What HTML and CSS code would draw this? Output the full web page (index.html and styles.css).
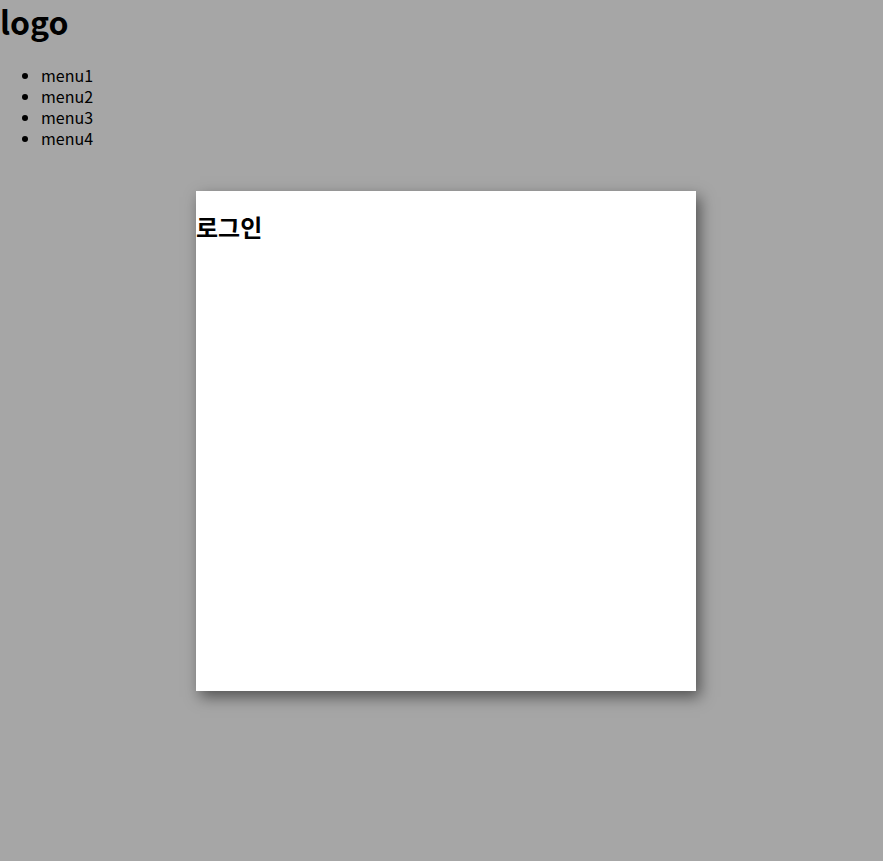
FILE: index.html
```html
<!DOCTYPE html>
<html lang="ko">
<head>
<meta charset="utf-8">
<title>login</title>
<link rel="stylesheet" href="styles.css">
</head>
<body>
<header class="header">
  <h1 class="logo">logo</h1>
  <ul class="menu">
    <li>menu1</li>
    <li>menu2</li>
    <li>menu3</li>
    <li>menu4</li>
  </ul>
</header>
<main class="stage">
  <section class="modal">
    <h2 class="modal-title">로그인</h2>
  </section>
</main>
</body>
</html>
```

FILE: styles.css
```css
html, body {
  margin: 0;
  padding: 0;
  background: #a6a6a6;
}
body {
  min-height: 100vh;
  font-family: "Noto Sans CJK KR", "Noto Sans", sans-serif;
  color: #000;
}
.logo {
  margin: 0 0 22px 0;
  font-size: 32px;
  line-height: 43px;
  font-weight: 700;
}
.menu {
  margin: 0;
  padding-left: 41px;
  font-size: 16px;
  line-height: 21px;
}
.stage {
  padding: 42px 0 60px 196px;
}
.modal {
  width: 500px;
  height: 500px;
  background: #fff;
  box-shadow: 4px 6px 14px rgba(0, 0, 0, 0.5);
}
.modal-title {
  margin: 0;
  padding-top: 20px;
  font-size: 24px;
  line-height: 32px;
  font-weight: 700;
}
```
